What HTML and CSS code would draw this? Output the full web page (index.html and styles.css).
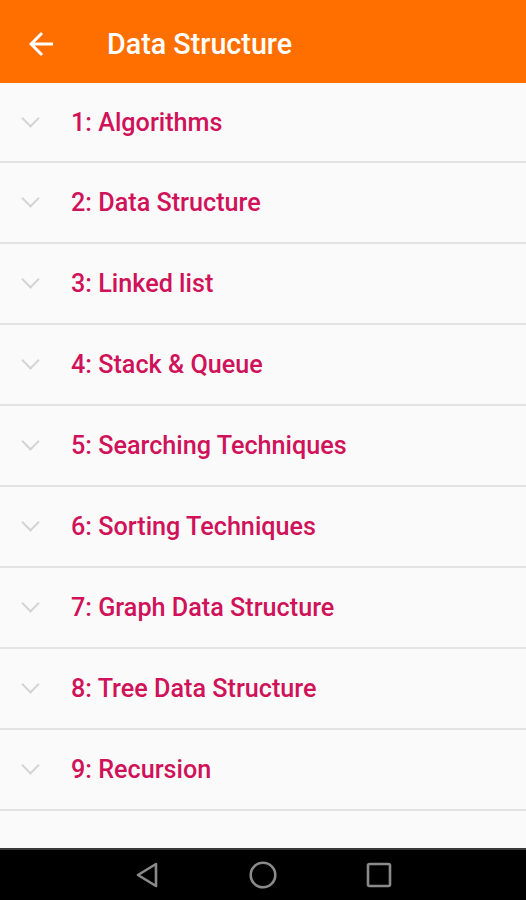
FILE: index.html
```html
<!DOCTYPE html>
<html>
<head>
<meta charset="utf-8">
<link rel="stylesheet" href="styles.css">
</head>
<body>
<div class="screen">
  <header class="appbar">
    <svg class="back" width="36" height="36" viewBox="0 0 24 24"><path d="M20 11H7.83l5.59-5.59L12 4l-8 8 8 8 1.41-1.41L7.83 13H20v-2z" fill="#fff"/></svg>
    <h1 class="title">Data Structure</h1>
  </header>
  <ul class="list">
    <li class="item"><span class="chev"></span><span class="label">1: Algorithms</span></li>
    <li class="item"><span class="chev"></span><span class="label">2: Data Structure</span></li>
    <li class="item"><span class="chev"></span><span class="label">3: Linked list</span></li>
    <li class="item"><span class="chev"></span><span class="label">4: Stack &amp; Queue</span></li>
    <li class="item"><span class="chev"></span><span class="label">5: Searching Techniques</span></li>
    <li class="item"><span class="chev"></span><span class="label">6: Sorting Techniques</span></li>
    <li class="item"><span class="chev"></span><span class="label">7: Graph Data Structure</span></li>
    <li class="item"><span class="chev"></span><span class="label">8: Tree Data Structure</span></li>
    <li class="item"><span class="chev"></span><span class="label">9: Recursion</span></li>
  </ul>
  <div class="spacer"></div>
  <nav class="navbar">
    <svg width="28" height="30" viewBox="0 0 28 30"><path d="M23 4 L5 15 L23 26 Z" fill="none" stroke="#8a8a8a" stroke-width="2.6" stroke-linejoin="round"/></svg>
    <svg width="30" height="30" viewBox="0 0 30 30"><circle cx="15" cy="15" r="12.3" fill="none" stroke="#8a8a8a" stroke-width="2.6"/></svg>
    <svg width="28" height="28" viewBox="0 0 28 28"><rect x="3" y="3" width="22" height="22" rx="1.5" fill="none" stroke="#8a8a8a" stroke-width="2.6"/></svg>
  </nav>
</div>
</body>
</html>
```
FILE: styles.css
```css
* { box-sizing: border-box; }
html, body { margin: 0; padding: 0; }
body {
  font-family: Roboto, "Noto Sans", sans-serif;
  background: #fafafa;
}
.screen {
  width: 526px;
  height: 900px;
  display: flex;
  flex-direction: column;
  background: #fafafa;
}
.appbar {
  height: 83px;
  flex: none;
  background: #ff6f00;
  display: flex;
  align-items: center;
  padding-left: 23px;
  padding-top: 4px;
}
.back { flex: none; }
.title {
  margin: 0 0 0 48px;
  color: #fff;
  font-size: 28.7px;
  font-weight: 500;
}
.list {
  list-style: none;
  margin: 0;
  padding: 0;
}
.item {
  height: 81px;
  border-bottom: 2px solid #e3e3e3;
  display: flex;
  align-items: center;
  padding-left: 19px;
}
.item:first-child { height: 80px; }
.chev {
  width: 13px;
  height: 13px;
  border-right: 2px solid #d4d4d4;
  border-bottom: 2px solid #d4d4d4;
  transform: rotate(45deg);
  margin: -8px 0 0 5px;
  flex: none;
}
.label {
  margin-left: 34px;
  color: #cf1259;
  font-size: 25.2px;
  font-weight: 500;
}
.spacer { flex: 1; }
.navbar {
  height: 52px;
  flex: none;
  background: #000;
  border-top: 2px solid #3a3a3a;
  display: flex;
  align-items: center;
  justify-content: center;
  gap: 87px;
}
```
